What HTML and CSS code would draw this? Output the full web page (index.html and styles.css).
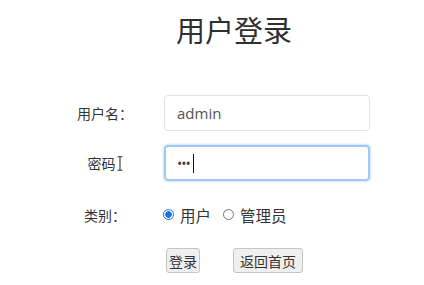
FILE: index.html
```html
<!DOCTYPE html>
<html lang="zh-CN">
<head>
<meta charset="utf-8">
<title>用户登录</title>
<link rel="stylesheet" href="styles.css">
</head>
<body>
<h1 class="title">用户登录</h1>
<form class="form">
  <label class="label" for="user">用户名：</label>
  <input class="field" id="user" type="text" value="admin">

  <span class="label">密码<svg class="ibeam" width="6" height="15" viewBox="0 0 6 15"><path d="M0.5 0.8h5M3 0.8v13.4M0.5 14.2h5" stroke="#333" stroke-width="1.1" fill="none"/></svg></span>
  <div class="field field-focus"><span class="dots">•••</span><span class="caret"></span></div>

  <span class="label">类别：</span>
  <div class="radios">
    <label class="opt"><input type="radio" name="role" class="radio" checked>用户</label>
    <label class="opt"><input type="radio" name="role" class="radio">管理员</label>
  </div>

  <span></span>
  <div class="buttons">
    <button type="button" class="btn btn-login">登录</button>
    <button type="button" class="btn btn-home">返回首页</button>
  </div>
</form>
</body>
</html>
```

FILE: styles.css
```css
* { box-sizing: border-box; }
body {
  margin: 0;
  background: #fff;
  color: #333;
  font-family: "Noto Sans", "Noto Sans CJK SC", sans-serif;
}
.title {
  margin: 0;
  height: 58px;
  line-height: 58px;
  padding-left: 44px;
  text-align: center;
  font-size: 29px;
  font-weight: 400;
  color: #2f2f2f;
  font-family: "Noto Sans CJK SC", sans-serif;
}
.form {
  margin: 37px 0 0 70px;
  width: 300px;
  display: grid;
  grid-template-columns: 70px 206px;
  grid-template-rows: 36px 36px 39px 25px;
  column-gap: 24px;
  row-gap: 14px;
}
.label {
  display: flex;
  align-items: center;
  justify-content: center;
  font-size: 14px;
  color: #333;
  font-family: "Noto Sans CJK SC", sans-serif;
}
.ibeam { margin-left: 1px; }
.field {
  height: 36px;
  width: 206px;
  border: 1px solid #e2e2e2;
  border-radius: 4px;
  padding: 0 12px;
  font-family: "Open Sans", "Noto Sans", sans-serif;
  font-size: 15px;
  color: #555;
  outline: none;
}
.field-focus {
  display: flex;
  align-items: center;
  border: 2px solid #9fc8f3;
  box-shadow: 0 0 2px 1px #cfe3fa;
  padding-left: 11px;
}
.dots {
  font-size: 14px;
  letter-spacing: -1px;
  color: #444;
}
.caret {
  display: inline-block;
  width: 1px;
  height: 19px;
  margin-left: 3px;
  background: #111;
}
.radios {
  display: flex;
  align-items: center;
  gap: 13px;
  font-family: "Noto Sans CJK SC", sans-serif;
  font-size: 15.5px;
  color: #333;
}
.opt {
  display: flex;
  align-items: center;
}
.radio {
  appearance: none;
  -webkit-appearance: none;
  width: 11px;
  height: 11px;
  margin: 0 6px 0 -1px;
  border: 1px solid #777;
  border-radius: 50%;
  background: #fff;
}
.radio:checked {
  border-color: #1a73e8;
  background: radial-gradient(circle, #1a73e8 0 3px, #fff 3.5px);
}
.buttons {
  display: flex;
  gap: 33px;
  padding-left: 2px;
}
.btn {
  height: 25px;
  padding: 0;
  border: 1px solid #c4c4c4;
  border-radius: 3px;
  background: #efefef;
  color: #333;
  font-family: "Noto Sans CJK SC", sans-serif;
  font-size: 14px;
}
.btn-login { width: 34px; }
.btn-home { width: 70px; }
```
